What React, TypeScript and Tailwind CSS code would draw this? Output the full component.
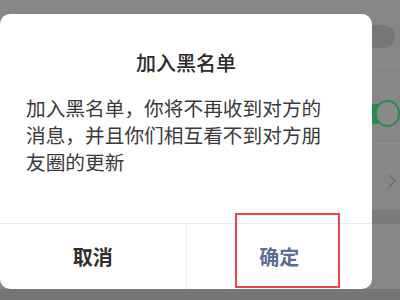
export default function App() {
  return (
    <div
      className="relative flex h-[300px] w-[400px] overflow-hidden bg-[#878787]"
      style={{ fontFamily: '"Noto Sans CJK SC", "Noto Sans", sans-serif' }}
    >
      <div className="mt-[14px] flex h-[275px] w-[372px] shrink-0 flex-col rounded-[10px] bg-white">
        <h2 className="pt-[35px] text-center text-[20px] font-medium leading-[28px] text-[#2b2b2b]">加入黑名单</h2>
        <p className="ml-[26px] mt-[17px] h-[81px] w-[300px] text-[19.7px] leading-[27px] text-[#3a3a3a]">
          加入黑名单，你将不再收到对方的消息，并且你们相互看不到对方朋友圈的更新
        </p>
        <div className="mt-auto flex h-[66px] border-t border-[#ececec]">
          <button type="button" className="flex-1 text-[20px] font-bold text-[#2e2e2e]">
            取消
          </button>
          <button type="button" className="flex-1 border-l border-[#ececec] text-[20px] font-bold text-[#5a6e96]">
            确定
          </button>
        </div>
      </div>

      <div className="flex w-[28px] flex-col">
        <div className="mt-[25px] h-[23px] w-[23px] rounded-r-full bg-[#767676]" />
        <div className="mt-[17px] h-px bg-[#8e8e8e]" />
        <div className="mt-[34px] flex h-[27px] items-center">
          <div className="h-[20px] w-[6px] bg-[#2a8a52]" />
          <div className="-ml-[3px] h-[27px] w-[27px] rounded-full border-2 border-[#2a8a52] bg-[#8a8a8a]" />
        </div>
        <div className="mt-[16px] h-px bg-[#8e8e8e]" />
        <div className="mt-[29px] flex h-[16px] items-center pl-[16px]">
          <svg width="8" height="14" viewBox="0 0 8 14" fill="none">
            <path d="M1 1l6 6-6 6" stroke="#6f6f6f" strokeWidth="1.6" />
          </svg>
        </div>
        <div className="mt-[21px] h-[14px] bg-[#7b7b7b]" />
      </div>

      <div className="absolute bottom-0 left-0 h-[11px] w-full bg-[#757575]" />
      <div className="absolute left-[235px] top-[213px] h-[75px] w-[105px] border-2 border-[#e8474a]" />
    </div>
  );
}
